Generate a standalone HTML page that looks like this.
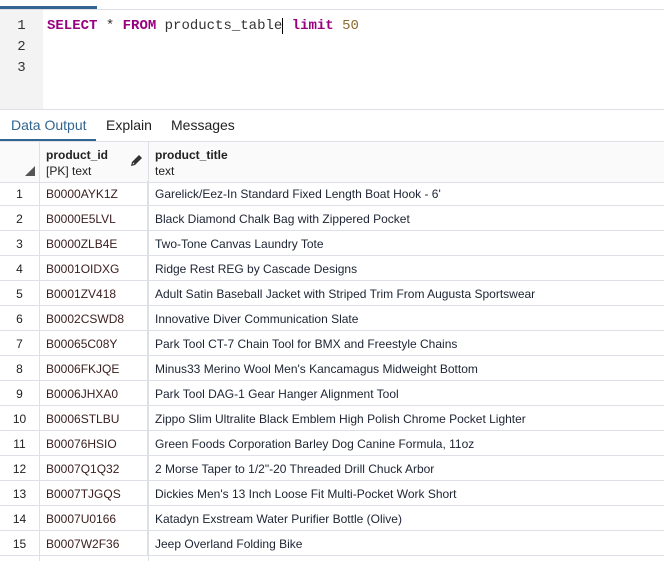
<!DOCTYPE html>
<html><head><style>
body{margin:0;width:664px;height:561px;overflow:hidden;background:#fff;font-family:"Liberation Sans",sans-serif;position:relative}
.a{position:absolute}
.mono{font-family:"Liberation Mono",monospace;font-size:14px}
.row{position:absolute;left:0;width:664px;height:24px;border-bottom:1px solid #dde0e6;font-size:12px;color:#222;line-height:26px}
.row .n{position:absolute;left:0;width:39px;text-align:center;border-right:1px solid #dde0e6;height:25px}
.row .i{position:absolute;left:40px;width:108px;padding-left:6px;box-sizing:border-box;border-right:1px solid #dde0e6;height:25px;color:#3a1e1e}
.row .t{position:absolute;left:155px;color:#1c2433}
</style></head><body>
<div class="a" style="left:0;top:6px;width:97px;height:3px;background:#326690"></div>
<div class="a" style="left:0;top:9px;width:664px;height:1px;background:#dde0e6"></div>
<div class="a" style="left:0;top:10px;width:43px;height:99px;background:#f3f3f3"></div>
<div class="a mono" style="left:0;top:14px;width:43px;text-align:center;line-height:21px;color:#333;padding-top:2px">1<br>2<br>3</div>
<div class="a mono" style="left:47px;top:16px;line-height:21px;color:#333;white-space:pre"><b style="color:#990080">SELECT</b> * <b style="color:#990080">FROM</b> products_table<span style="border-left:1px solid #000;margin-left:0"></span> <b style="color:#990080">limit</b> <span style="color:#8a6a30">50</span></div>
<div class="a" style="left:0;top:109px;width:664px;height:1px;background:#dde0e6"></div>
<div class="a" style="left:11px;top:117px;font-size:14px;color:#326690">Data Output</div>
<div class="a" style="left:106px;top:117px;font-size:14px;color:#222">Explain</div>
<div class="a" style="left:171px;top:117px;font-size:14px;color:#222">Messages</div>
<div class="a" style="left:0;top:139px;width:96px;height:3px;background:#326690"></div>
<div class="a" style="left:0;top:141px;width:664px;height:40px;background:#fafafa;border-top:1px solid #dde0e6;border-bottom:1px solid #dde0e6"></div>
<div class="a" style="left:39px;top:142px;width:1px;height:419px;background:#dde0e6"></div>
<div class="a" style="left:148px;top:142px;width:1px;height:419px;background:#dde0e6"></div>
<div class="a" style="left:25px;top:166px;width:0;height:0;border-left:10px solid transparent;border-bottom:10px solid #555"></div>
<div class="a" style="left:46px;top:147px;font-size:12px;line-height:16px;color:#222"><b>product_id</b><br>[PK] text</div>
<svg class="a" style="left:130px;top:154px" width="13" height="13" viewBox="0 0 13 13"><path d="M9 1l3 3-7 7-4 1 1-4z" fill="#333"/><path d="M3 9l1 1" stroke="#fafafa"/></svg>
<div class="a" style="left:155px;top:147px;font-size:12px;line-height:16px;color:#222"><b>product_title</b><br>text</div>
<div class="row" style="top:181px"><div class="n">1</div><div class="i">B0000AYK1Z</div><div class="t">Garelick/Eez-In Standard Fixed Length Boat Hook - 6'</div></div>
<div class="row" style="top:206px"><div class="n">2</div><div class="i">B0000E5LVL</div><div class="t">Black Diamond Chalk Bag with Zippered Pocket</div></div>
<div class="row" style="top:231px"><div class="n">3</div><div class="i">B0000ZLB4E</div><div class="t">Two-Tone Canvas Laundry Tote</div></div>
<div class="row" style="top:256px"><div class="n">4</div><div class="i">B0001OIDXG</div><div class="t">Ridge Rest REG by Cascade Designs</div></div>
<div class="row" style="top:281px"><div class="n">5</div><div class="i">B0001ZV418</div><div class="t">Adult Satin Baseball Jacket with Striped Trim From Augusta Sportswear</div></div>
<div class="row" style="top:306px"><div class="n">6</div><div class="i">B0002CSWD8</div><div class="t">Innovative Diver Communication Slate</div></div>
<div class="row" style="top:331px"><div class="n">7</div><div class="i">B00065C08Y</div><div class="t">Park Tool CT-7 Chain Tool for BMX and Freestyle Chains</div></div>
<div class="row" style="top:356px"><div class="n">8</div><div class="i">B0006FKJQE</div><div class="t">Minus33 Merino Wool Men's Kancamagus Midweight Bottom</div></div>
<div class="row" style="top:381px"><div class="n">9</div><div class="i">B0006JHXA0</div><div class="t">Park Tool DAG-1 Gear Hanger Alignment Tool</div></div>
<div class="row" style="top:406px"><div class="n">10</div><div class="i">B0006STLBU</div><div class="t">Zippo Slim Ultralite Black Emblem High Polish Chrome Pocket Lighter</div></div>
<div class="row" style="top:431px"><div class="n">11</div><div class="i">B00076HSIO</div><div class="t">Green Foods Corporation Barley Dog Canine Formula, 11oz</div></div>
<div class="row" style="top:456px"><div class="n">12</div><div class="i">B0007Q1Q32</div><div class="t">2 Morse Taper to 1/2"-20 Threaded Drill Chuck Arbor</div></div>
<div class="row" style="top:481px"><div class="n">13</div><div class="i">B0007TJGQS</div><div class="t">Dickies Men's 13 Inch Loose Fit Multi-Pocket Work Short</div></div>
<div class="row" style="top:506px"><div class="n">14</div><div class="i">B0007U0166</div><div class="t">Katadyn Exstream Water Purifier Bottle (Olive)</div></div>
<div class="row" style="top:531px"><div class="n">15</div><div class="i">B0007W2F36</div><div class="t">Jeep Overland Folding Bike</div></div>
</body></html>
